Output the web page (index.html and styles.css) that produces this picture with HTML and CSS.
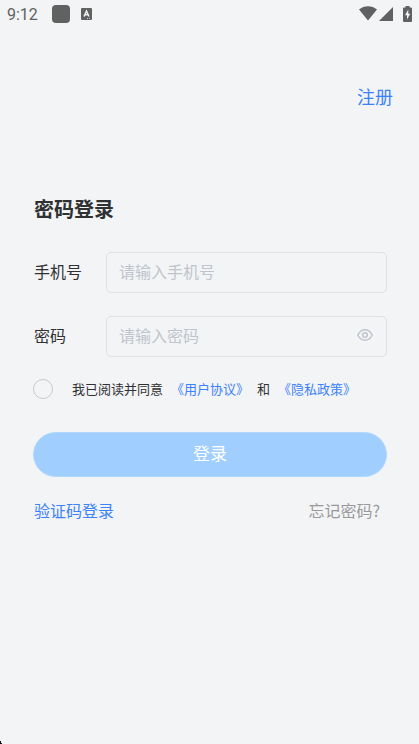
FILE: index.html
```html
<!DOCTYPE html>
<html lang="zh-CN">
<head>
<meta charset="utf-8">
<meta name="viewport" content="width=device-width, initial-scale=1">
<title>密码登录</title>
<link rel="stylesheet" href="styles.css">
</head>
<body>
<header class="status">
  <span class="time">9:12</span>
  <span class="app"></span>
  <svg class="lang" width="11" height="12" viewBox="0 0 11 12" aria-hidden="true"><rect width="11" height="12" rx="1" fill="#5f6261"/><path d="M3 8.500L5.500 3L8 8.500M4 6.800H7" fill="none" stroke="#f3f4f6" stroke-width="1.400"/><path d="M6 10.500h1M8 10.500h1" stroke="#c9cbcc"/></svg>
  <span class="signals">
    <svg width="18" height="15" viewBox="0 0 18 15" aria-hidden="true"><path d="M0 3.500C5-1 13-1 18 3.500L9 14.500Z" fill="#5f6261"/></svg>
    <svg width="14" height="14" viewBox="0 0 14 14" aria-hidden="true"><path d="M14 0V14H0Z" fill="#5f6261"/></svg>
    <svg class="battery" width="9" height="16" viewBox="0 0 9 16" aria-hidden="true"><path d="M2.500 0h4v1.500H8q1 0 1 1V15q0 1-1 1H1q-1 0-1-1V2.500q0-1 1-1h1.500Z" fill="#5f6261"/><path d="M5.300 3.500L2 9.300h2V13.500L7.200 7.700H5.300Z" fill="#f3f4f6"/></svg>
  </span>
</header>
<main class="page">
  <nav class="top"><a class="link register" href="#register">注册</a></nav>
  <form class="form">
    <h1 class="title">密码登录</h1>
    <div class="row">
      <label class="label" for="phone">手机号</label>
      <div class="field"><input class="input" id="phone" type="tel" placeholder="请输入手机号"></div>
    </div>
    <div class="row">
      <label class="label" for="password">密码</label>
      <div class="field">
        <input class="input" id="password" type="password" placeholder="请输入密码">
        <button class="eye" type="button" aria-label="显示密码">
          <svg width="16" height="12" viewBox="0 0 16 12" fill="none" stroke="#c0c4cc" stroke-width="1.500" aria-hidden="true"><path d="M.8 6C2.500 2.500 5 .8 8 .8S13.500 2.500 15.200 6C13.500 9.500 11 11.200 8 11.200S2.500 9.500 .8 6Z"/><circle cx="8" cy="6" r="2.300"/></svg>
        </button>
      </div>
    </div>
    <div class="agree">
      <input class="check" id="agree" type="checkbox">
      <label class="agree-text" for="agree">我已阅读并同意</label>
      <a class="link" href="#terms">《用户协议》</a>
      <span>和</span>
      <a class="link" href="#privacy">《隐私政策》</a>
    </div>
    <button class="submit" type="submit">登录</button>
    <div class="more">
      <a class="link" href="#code">验证码登录</a>
      <a class="forgot" href="#forgot">忘记密码?</a>
    </div>
  </form>
</main>
<svg class="corner" width="2" height="3" viewBox="0 0 2 3" aria-hidden="true"><path d="M0 0h1v2h1v1H0Z" fill="#111"/></svg>
</body>
</html>
```
FILE: styles.css
```css
* {
  box-sizing: border-box;
}

body {
  margin: 0;
  min-height: 100vh;
  background: #f3f4f6;
  color: #303133;
  font: 16px/24px "Noto Sans CJK SC", sans-serif;
}

a {
  text-decoration: none;
}

.link {
  color: #3c82fc;
}

.status {
  display: flex;
  align-items: center;
  height: 28px;
  padding: 0 7px;
}

.time {
  padding-top: 2px;
  color: #5f6261;
  font-family: Roboto, sans-serif;
  font-size: 16px;
}

.app {
  width: 18px;
  height: 18px;
  margin: 0 11px 0 14px;
  border-radius: 4px;
  background: #5f6261;
}

.signals {
  display: flex;
  align-items: center;
  gap: 2px;
  margin-left: auto;
  padding-bottom: 1px;
}

.battery {
  margin-left: 8px;
}

.page {
  padding: 56px 32px 0 33px;
}

.top {
  display: flex;
  justify-content: flex-end;
  margin-right: -6px;
}

.register {
  font-size: 18px;
}

.title {
  margin: 89px 0 31px;
  padding-left: 1px;
  font-size: 20px;
  line-height: 24px;
  font-weight: 700;
}

.row {
  display: flex;
  margin-bottom: 23px;
}

.label {
  width: 73px;
  padding: 7px 0 0 1px;
  line-height: 24px;
}

.field {
  display: flex;
  flex: 1;
  align-items: center;
  height: 41px;
  padding: 0 13px 3px 12px;
  border: 1px solid #dfe1e7;
  border-radius: 5px;
}

.input {
  flex: 1;
  min-width: 0;
  padding: 0;
  border: 0;
  outline: 0;
  background: none;
  color: inherit;
  font: inherit;
}

.input::placeholder {
  color: #c0c4cc;
}

.eye {
  display: flex;
  padding: 0;
  border: 0;
  background: none;
}

.agree {
  display: flex;
  align-items: center;
  height: 20px;
  margin-top: -1px;
  font-size: 13px;
  line-height: 20px;
}

.check {
  appearance: none;
  width: 20px;
  height: 20px;
  margin: 0 19px 0 0;
  border: 1px solid #c8c9cc;
  border-radius: 50%;
}

.check:checked {
  background: #3c82fc;
}

.agree .link {
  margin: 0 8px;
}

.submit {
  display: block;
  width: 100%;
  height: 45px;
  margin: 33px 0 21px;
  padding: 0 0 3px;
  border: 1px solid #b3d8ff;
  border-radius: 23px;
  background: #a0cfff;
  color: #fff;
  font: inherit;
  font-size: 17px;
}

.more {
  display: flex;
  justify-content: space-between;
  padding: 0 7px 0 1px;
}

.forgot {
  color: #999;
}

.corner {
  position: fixed;
  bottom: 0;
  left: 0;
}
```
